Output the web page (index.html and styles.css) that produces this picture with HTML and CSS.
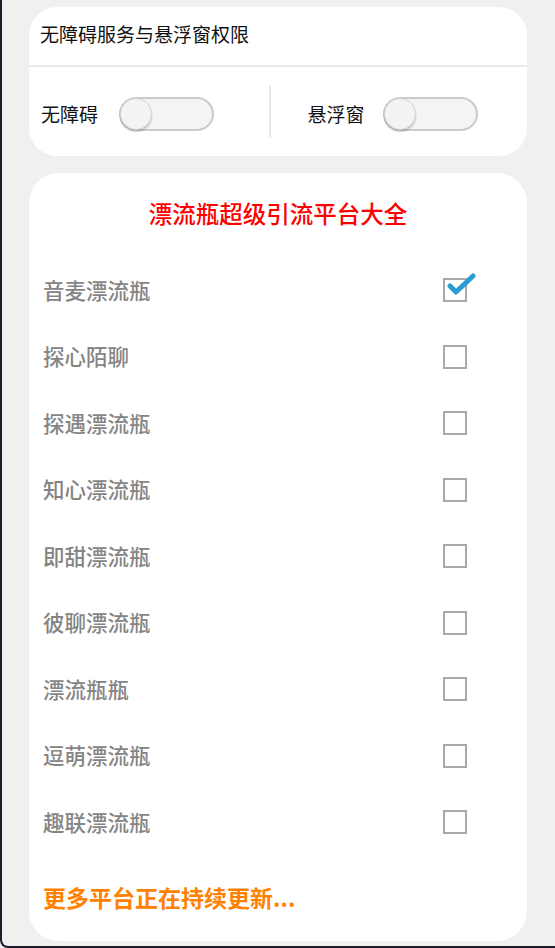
FILE: index.html
```html
<!DOCTYPE html>
<html lang="zh-CN">
<head>
<meta charset="utf-8">
<title>权限与平台</title>
<link rel="stylesheet" href="styles.css">
</head>
<body>
<div class="frame">
  <section class="card perm">
    <div class="perm-title">无障碍服务与悬浮窗权限</div>
    <div class="perm-row">
      <div class="perm-half left">
        <span class="perm-label">无障碍</span>
        <span class="toggle"><span class="knob"></span></span>
      </div>
      <div class="vline"></div>
      <div class="perm-half right">
        <span class="perm-label">悬浮窗</span>
        <span class="toggle"><span class="knob"></span></span>
      </div>
    </div>
  </section>

  <section class="card list">
    <h1 class="list-title">漂流瓶超级引流平台大全</h1>
    <ul class="items">
      <li class="item"><span class="name">音麦漂流瓶</span><span class="box checked"><svg class="tick" viewBox="0 0 30 24" width="30" height="24"><path d="M4 14 L10 20 L27 4" fill="none" stroke="#2b9cd0" stroke-width="5" stroke-linecap="round" stroke-linejoin="round"/></svg></span></li>
      <li class="item"><span class="name">探心陌聊</span><span class="box"></span></li>
      <li class="item"><span class="name">探遇漂流瓶</span><span class="box"></span></li>
      <li class="item"><span class="name">知心漂流瓶</span><span class="box"></span></li>
      <li class="item"><span class="name">即甜漂流瓶</span><span class="box"></span></li>
      <li class="item"><span class="name">彼聊漂流瓶</span><span class="box"></span></li>
      <li class="item"><span class="name">漂流瓶瓶</span><span class="box"></span></li>
      <li class="item"><span class="name">逗萌漂流瓶</span><span class="box"></span></li>
      <li class="item"><span class="name">趣联漂流瓶</span><span class="box"></span></li>
    </ul>
    <div class="more">更多平台正在持续更新...</div>
  </section>
</div>
</body>
</html>
```
FILE: styles.css
```css
html, body {
  margin: 0;
  padding: 0;
}
body {
  background: #f0f0f0;
  font-family: "Noto Sans CJK SC", "Noto Sans", sans-serif;
}
.frame {
  box-sizing: border-box;
  width: 555px;
  height: 948px;
  border-left: 2px solid #1c1c2a;
  border-bottom: 2px solid #1c1c2a;
  border-bottom-left-radius: 8px;
  padding-top: 7px;
  display: flex;
  flex-direction: column;
  align-items: flex-start;
}
.card {
  background: #fff;
  width: 498px;
  margin-left: 27px;
  box-sizing: border-box;
}
.perm {
  height: 149px;
  border-radius: 28px;
  display: flex;
  flex-direction: column;
}
.perm-title {
  box-sizing: border-box;
  height: 60px;
  padding-left: 11px;
  padding-bottom: 5px;
  display: flex;
  align-items: center;
  font-size: 19px;
  color: #111;
  border-bottom: 2px solid #e8e8e8;
}
.perm-row {
  flex: 1;
  display: flex;
  align-items: center;
  padding-top: 4px;
}
.perm-half {
  display: flex;
  align-items: center;
  height: 100%;
}
.perm-half.left {
  width: 240px;
  padding-left: 12px;
  box-sizing: border-box;
}
.perm-half.right {
  padding-left: 37px;
}
.perm-label {
  font-size: 19px;
  color: #111;
  width: 57px;
}
.left .toggle { margin-left: 21px; }
.right .toggle { margin-left: 18px; }
.vline {
  width: 1.5px;
  height: 51px;
  margin-top: -4px;
  background: #e6e6e6;
}
.toggle {
  position: relative;
  box-sizing: border-box;
  width: 95px;
  height: 34px;
  border-radius: 17px;
  border: 2px solid #cbcbcb;
  background: #f4f4f4;
}
.knob {
  position: absolute;
  left: -1px;
  top: -1px;
  width: 32px;
  height: 32px;
  box-sizing: border-box;
  border-radius: 50%;
  background: #f3f3f3;
  border: 1px solid #d4d4d4;
  box-shadow: 0 2px 2px rgba(0,0,0,0.18);
}
.list {
  margin-top: 17px;
  height: 768px;
  border-radius: 30px;
  padding: 25px 0 0 0;
}
.list-title {
  margin: 0;
  font-size: 23.5px;
  font-weight: 500;
  line-height: 30px;
  color: #ff0000;
  text-align: center;
}
.items {
  list-style: none;
  margin: 29px 0 0 0;
  padding: 0;
}
.item {
  height: 66.5px;
  display: flex;
  align-items: center;
  justify-content: space-between;
  padding-left: 14px;
  padding-right: 60px;
}
.name {
  font-size: 21.5px;
  font-weight: 500;
  color: #858585;
  margin-top: -2px;
}
.box {
  position: relative;
  width: 24px;
  height: 24px;
  box-sizing: border-box;
  border: 2px solid #a9a9a9;
  background: #fff;
}
.tick {
  position: absolute;
  left: 1px;
  top: -8px;
}
.more {
  margin-top: 26px;
  padding-left: 14px;
  font-size: 23px;
  font-weight: 700;
  line-height: 30px;
  color: #ff8100;
}
```
